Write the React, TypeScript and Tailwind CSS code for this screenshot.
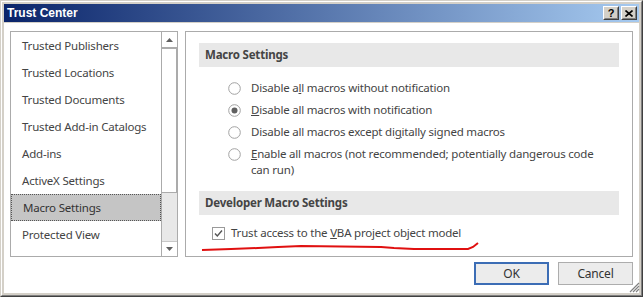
import React from "react";

const listItems = [
  "Trusted Publishers",
  "Trusted Locations",
  "Trusted Documents",
  "Trusted Add-in Catalogs",
  "Add-ins",
  "ActiveX Settings",
  "Macro Settings",
  "Protected View",
  "Message Bar",
];

function Radio({ checked }: { checked?: boolean }) {
  return (
    <svg width="13" height="13" viewBox="0 0 13 13" className="shrink-0">
      <circle cx="6.5" cy="6.5" r="5.8" fill="#fff" stroke="#a2a2a2" strokeWidth="1" />
      {checked && <circle cx="6.5" cy="6.5" r="3" fill="#606060" />}
    </svg>
  );
}

function Check() {
  return (
    <svg width="13" height="13" viewBox="0 0 13 13" className="shrink-0">
      <rect x="0.5" y="0.5" width="12" height="12" fill="#fff" stroke="#9a9a9a" />
      <path d="M3 6.5 L5.3 9 L10 3.5" fill="none" stroke="#555" strokeWidth="1.4" />
    </svg>
  );
}

function CaptionButton({ children }: { children: React.ReactNode }) {
  return (
    <div className="w-[16px] h-[14px] bg-[#d4d0c8] border border-t-white border-l-white border-r-[#404040] border-b-[#404040] flex">
      <div className="flex-1 border border-t-[#d4d0c8] border-l-[#d4d0c8] border-r-[#808080] border-b-[#808080] flex items-center justify-center">
        {children}
      </div>
    </div>
  );
}

export default function App() {
  return (
    <div
      className="relative w-[643px] h-[297px] bg-[#d4d0c8] border border-t-[#d4d0c8] border-l-[#d4d0c8] border-r-[#404040] border-b-[#404040]"
      style={{ fontFamily: '"Noto Sans", "Open Sans", sans-serif' }}
    >
      <div className="h-full w-full border border-t-white border-l-white border-r-[#808080] border-b-[#808080] p-[2px] flex flex-col">
        {/* Title bar */}
        <div className="h-[18px] shrink-0 flex items-center pl-[3px] pr-[2px] bg-[linear-gradient(to_right,#0a246a,#a6caf0)]">
          <span
            className="text-white font-bold text-[12px] leading-none flex-1"
            style={{ fontFamily: '"Liberation Sans", Arial, sans-serif' }}
          >
            Trust Center
          </span>
          <div className="flex gap-[2px]">
            <CaptionButton>
              <span
                className="text-black font-bold text-[11px] leading-none"
                style={{ fontFamily: '"Liberation Sans", Arial, sans-serif' }}
              >
                ?
              </span>
            </CaptionButton>
            <CaptionButton>
              <svg width="8" height="7" viewBox="0 0 8 7">
                <path d="M0.5 0.5 L7.5 6.5 M7.5 0.5 L0.5 6.5" stroke="#000" strokeWidth="1.6" />
              </svg>
            </CaptionButton>
          </div>
        </div>

        {/* Client area */}
        <div className="mt-[1px] flex-1 bg-white flex flex-col pl-[6px] pr-[6px] pt-[8px] text-[#444] text-[11.5px] tracking-[-0.2px]">
          <div className="flex gap-[7px] h-[226px]">
            {/* List box */}
            <div className="w-[168px] h-full border border-[#ababab] flex">
              <div className="flex-1 overflow-hidden">
                {listItems.map((it) => {
                  const sel = it === "Macro Settings";
                  return (
                    <div
                      key={it}
                      className={
                        "h-[27px] flex items-center pl-[11px] leading-none " +
                        (sel ? "bg-[#c5c5c5] border border-dotted border-[#555] pl-[10px] text-[#333]" : "")
                      }
                    >
                      {it}
                    </div>
                  );
                })}
              </div>
              <div className="w-[16px] border-l border-[#ababab] flex flex-col">
                <div className="h-[15px] bg-white flex items-center justify-center">
                  <svg width="7" height="4" viewBox="0 0 7 4">
                    <path d="M0 4 L3.5 0 L7 4 Z" fill="#606060" />
                  </svg>
                </div>
                <div className="h-[146px] bg-white border-t-2 border-b border-r border-[#ababab]" />
                <div className="flex-1 bg-[#e8e8e8]" />
                <div className="h-[15px] bg-white border-t border-[#c8c8c8] flex items-center justify-center">
                  <svg width="7" height="4" viewBox="0 0 7 4">
                    <path d="M0 0 L3.5 4 L7 0 Z" fill="#606060" />
                  </svg>
                </div>
              </div>
            </div>

            {/* Right panel */}
            <div className="flex-1 h-full border border-[#ababab] pt-[11px] px-[13px]">
              <div className="h-[24px] bg-[#e8e8e8] flex items-center pl-[6px] font-bold text-[#444]">
                Macro Settings
              </div>
              <div className="pl-[29px] pt-[10px] flex flex-col">
                <div className="h-[22px] flex items-center gap-[10px]">
                  <Radio />
                  <span>
                    Disable a<u>l</u>l macros without notification
                  </span>
                </div>
                <div className="h-[22px] flex items-center gap-[10px]">
                  <Radio checked />
                  <span>
                    <u>D</u>isable all macros with notification
                  </span>
                </div>
                <div className="h-[22px] flex items-center gap-[10px]">
                  <Radio />
                  <span>
                    Disable all macros except di<u>g</u>itally signed macros
                  </span>
                </div>
                <div className="flex items-start gap-[10px] pt-[3px]">
                  <div className="pt-[2px]">
                    <Radio />
                  </div>
                  <span className="leading-[16px] w-[360px]">
                    <u>E</u>nable all macros (not recommended; potentially dangerous code can run)
                  </span>
                </div>
              </div>
              <div className="mt-[13px] h-[24px] bg-[#e8e8e8] flex items-center pl-[6px] font-bold text-[#444]">
                Developer Macro Settings
              </div>
              <div className="h-[36px] flex items-center gap-[6px] pl-[13px]">
                <Check />
                <span>
                  Trust access to the <u>V</u>BA project object model
                </span>
              </div>
            </div>
          </div>

          {/* Buttons */}
          <div className="mt-[5px] flex justify-end gap-[9px]">
            <button className="w-[75px] h-[23px] border-2 border-[#3c6db5] bg-[#ececec] text-[#333] text-[12px] leading-none">
              OK
            </button>
            <button className="w-[75px] h-[23px] border border-[#adadad] bg-[#ececec] text-[#333] text-[12px] leading-none">
              Cancel
            </button>
          </div>
        </div>
      </div>

      {/* Resize grip */}
      <svg className="absolute left-[628px] top-[281px]" width="11" height="11" viewBox="0 0 11 11">
        <path d="M10 1 L1 10 M10 4 L4 10 M10 7 L7 10" stroke="#808080" strokeWidth="1.2" />
      </svg>

      {/* Red hand-drawn underline */}
      <svg className="absolute left-0 top-0 pointer-events-none" width="643" height="297">
        <polyline
          points="201,249 230,248 257,247 277,246 300,245 380,246 393,247 413,248 467,248 472,246 477,242"
          fill="none"
          stroke="#e01010"
          strokeWidth="2"
        />
      </svg>
    </div>
  );
}
